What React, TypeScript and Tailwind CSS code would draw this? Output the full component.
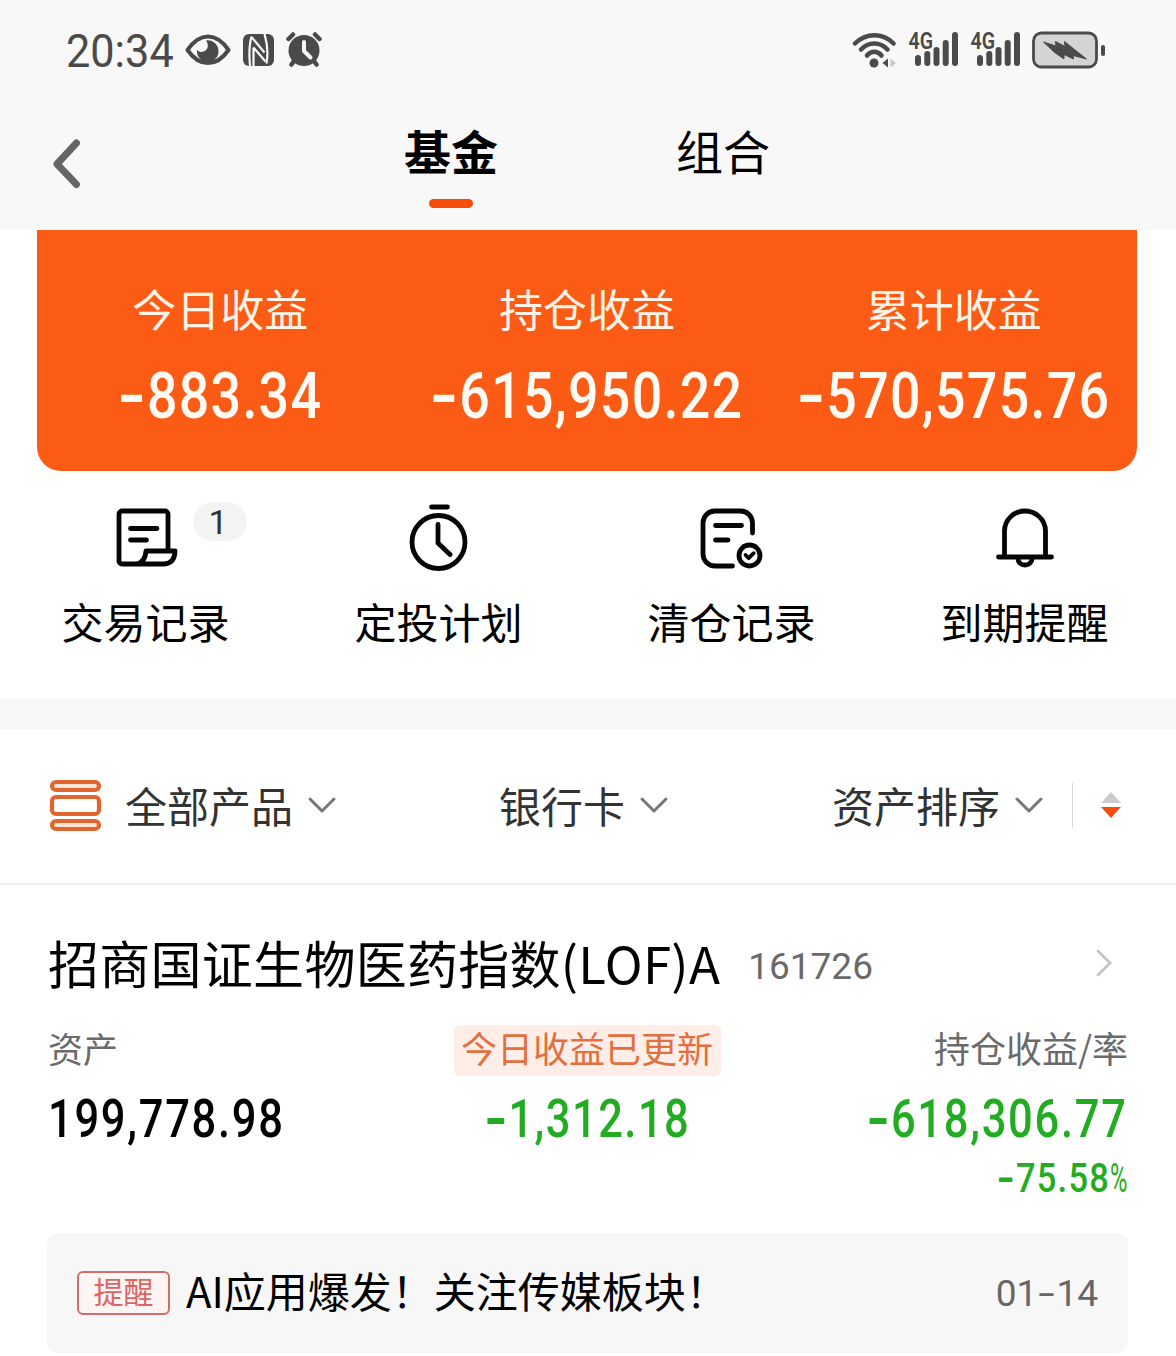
import type { ReactNode } from "react";
import clsx from "clsx";

const summary = [
  { label: "今日收益", value: "-883.34" },
  { label: "持仓收益", value: "-615,950.22" },
  { label: "累计收益", value: "-570,575.76" },
];

// Condensed figures, the sign is drawn wider than the font's own hyphen
const Num = ({ value, className, signClass }: { value: string; className: string; signClass: string }) => {
  const negative = value.startsWith("-");
  return (
    <span className={clsx("inline-flex shrink-0 whitespace-nowrap leading-none font-['Roboto',sans-serif]", className)}>
      {negative && <span className={clsx("flex scale-x-[1.4] justify-center font-bold", signClass)}>-</span>}
      <span>{negative ? value.slice(1) : value}</span>
    </span>
  );
};

const Signal = () => (
  <svg width="52" height="54" viewBox="0 -8 52 54" fill="#4a4a4a">
    <text x="0.500" y="17.500" fontSize="23.500" fontWeight="600" textLength="24.500" lengthAdjust="spacingAndGlyphs" fontFamily="Roboto, sans-serif">4G</text>
    <rect x="7" y="24" width="6" height="11" rx="3" />
    <rect x="16.300" y="20" width="6" height="15" rx="3" />
    <rect x="25.500" y="16" width="6" height="19" rx="3" />
    <rect x="34.700" y="9" width="6" height="26" rx="3" />
    <rect x="44" y="1" width="6" height="34" rx="3" />
  </svg>
);

const StatusBar = () => (
  <div className="flex h-[100px] items-center">
    <div className="ml-[66px] w-[119px] pt-0.5">
      <span className="inline-block origin-left scale-x-[0.94] text-[46px] leading-none text-[#4a4a4a] font-['Roboto',sans-serif]">20:34</span>
    </div>
    <svg width="46" height="32" viewBox="0 0 46 32">
      <path d="M2.500 16C8 8 15 2.500 23 2.500S38 8 43.500 16C38 24 31 29 23 29S8 24 2.500 16Z" fill="none" stroke="#4a4a4a" strokeWidth="4" strokeLinejoin="round" />
      <path d="M21 6.500a10.800 10.800 0 1 1-9 9.500c2 2.500 6 2.500 8.500.5 3-2.500 3-6.500.5-10Z" fill="#4a4a4a" />
    </svg>
    <svg width="32" height="34" viewBox="0 0 32 34" className="ml-[11px]">
      <rect x="1" y="1" width="31" height="32" rx="6" fill="#4a4a4a" />
      <path d="M9.500 3.500C7 12 7 22 8 33M22.500 1C25.500 11 26 22 24.500 30.500M9.500 4 22.500 19.500M11.500 14.500 23.500 28.500M11.500 14.500V33" fill="none" stroke="#f8f8f8" strokeWidth="2.200" />
    </svg>
    <svg width="36" height="36" viewBox="0 0 36 36" className="ml-[12px]">
      <circle cx="18" cy="18.500" r="15.500" fill="#4a4a4a" />
      <path d="M2.500 7 7 2.500M33.500 7 29 2.500M8 29 5.500 32.500M28 29 30.500 32.500" stroke="#4a4a4a" strokeWidth="4.500" strokeLinecap="round" />
      <path d="M18 10v9l6.500 6.500" fill="none" stroke="#f8f8f8" strokeWidth="4" strokeLinecap="round" strokeLinejoin="round" />
    </svg>
    <div className="ml-auto mr-[70px] flex items-center">
      <svg width="46" height="36" viewBox="0 0 46 36" className="mr-[10px]">
        <g fill="none" stroke="#4a4a4a" strokeWidth="4.500" strokeLinecap="round">
          <path d="M3 11.500C14 .5 31 .5 41.500 11.500" />
          <path d="M9 17.500C16.500 9.500 28 9.500 35.500 17.500" />
          <path d="M15 23.500C19 18.500 25.500 18.500 29.500 23.500" />
        </g>
        <circle cx="22" cy="31" r="4.500" fill="#4a4a4a" />
        <path d="M36 26.500v9L30.500 31Z" fill="#4a4a4a" />
        <path d="M38.500 26.500v9L44 31Z" fill="#c8c8c8" />
      </svg>
      <Signal />
      <div className="w-[10px]" />
      <Signal />
      <svg width="74" height="38" viewBox="0 0 74 38" className="ml-[10px]">
        <rect x="1.500" y="2" width="63" height="34" rx="8" fill="#d4d4d4" stroke="#4a4a4a" strokeWidth="2.800" />
        <rect x="69" y="14" width="4" height="11" rx="2" fill="#4a4a4a" />
        <path d="M11.500 11 24 15 23.500 10.500 33 15.500 32.500 10.500 45 20.500 54.500 28 41 24.500 41.500 28 32 23.500V28L22 21Z" fill="#4a4a4a" stroke="#4a4a4a" strokeLinejoin="round" />
      </svg>
    </div>
  </div>
);

const NavBar = () => (
  <div className="flex h-[130px] text-[47px] leading-none text-black">
    <svg width="30" height="54" viewBox="0 0 30 54" className="ml-[52px] mt-[37px]">
      <path d="M24.500 6 5 27 24.500 47.500" fill="none" stroke="#666" strokeWidth="7" strokeLinecap="round" strokeLinejoin="round" />
    </svg>
    <div className="ml-[322px] mt-[26px] flex w-[94px] flex-col items-center">
      <span className="font-bold">基金</span>
      <span className="mt-[26px] h-[9px] w-11 rounded-full bg-[#f84c0c]" />
    </div>
    <span className="ml-[178px] mt-[26px]">组合</span>
  </div>
);

const Action = ({ label, badge, children }: { label: string; badge?: string; children: ReactNode }) => (
  <div className="relative flex flex-col items-center">
    <svg width="70" height="70" viewBox="0 0 70 70" className="mt-[31px]" fill="none" stroke="#050505" strokeWidth="4.800" strokeLinecap="round" strokeLinejoin="round">
      {children}
    </svg>
    <span className="mt-[28px] text-[42px] leading-none text-black">{label}</span>
    {badge && (
      <span className="absolute left-[194px] top-[31px] flex h-[39px] w-[54px] items-center justify-center rounded-full bg-[#f4f4f4] pr-1 text-[34px] leading-none text-[#333] font-['Roboto',sans-serif]">
        {badge}
      </span>
    )}
  </div>
);

const Actions = () => (
  <div className="-ml-px grid h-[228px] w-[1172px] grid-cols-4">
    <Action label="交易记录" badge="1">
      <path d="M57 48V12a3 3 0 0 0-3-3H11a3 3 0 0 0-3 3v47a3 3 0 0 0 3 3h42q11-1 11-13H35q-1 12-10 13M19.500 26.500H46M19.500 38H35.500" />
    </Action>
    <Action label="定投计划">
      <circle cx="34.500" cy="40" r="26.500" />
      <path d="M27.500 5H43.500M34 22.500V41L46 52.500" />
    </Action>
    <Action label="清仓记录">
      <path d="M55.500 31V21a12 12 0 0 0-12-12H18A12 12 0 0 0 6 21V52a12 12 0 0 0 12 12H35.500M18.500 23.500H44.500M18.500 38H31" />
      <circle cx="52.500" cy="53.500" r="10.500" />
      <path d="m48.500 53 3.200 3.200 5-5" strokeWidth="3.800" />
    </Action>
    <Action label="到期提醒">
      <path d="M14.500 55V29a20.500 20 0 0 1 41 0V55M8.500 55H61.500M28 57a7 6 0 0 0 14 0" />
    </Action>
  </div>
);

const ChevronDown = () => (
  <svg width="30" height="20" viewBox="0 0 30 20">
    <path d="M3 4 15 16 27 4" fill="none" stroke="#777" strokeWidth="3" strokeLinecap="round" strokeLinejoin="round" />
  </svg>
);

const FilterBar = () => (
  <div className="flex h-[156px] items-center border-b-2 border-[#ececec] pb-0.5 text-[42px] leading-none text-[#333]">
    <svg width="54" height="54" viewBox="0 0 54 54" className="ml-[48px]" stroke="#e1652f" strokeWidth="4.200" fill="#ffe6d4">
      <rect x="4" y="4" width="47" height="8" rx="4" />
      <rect x="4" y="19" width="47" height="17" rx="4" fill="#fff" />
      <rect x="4" y="43" width="47" height="8" rx="4" />
    </svg>
    <span className="ml-[23px] mr-[14px] pb-px">全部产品</span>
    <ChevronDown />
    <span className="ml-[162px] mr-[14px] pb-px">银行卡</span>
    <ChevronDown />
    <span className="ml-[163px] mr-[14px] pb-px">资产排序</span>
    <ChevronDown />
    <div className="ml-[28px] h-[45px] w-px bg-[#d8d8d8]" />
    <svg width="22" height="28" viewBox="0 0 22 28" className="ml-[27px]">
      <path d="M11 1 21 12H1Z" fill="#ccc" />
      <path d="M11 27 21 16H1Z" fill="#f84c0c" />
    </svg>
  </div>
);

const FundCard = () => (
  <div className="px-12 pt-[52px]">
    <div className="flex h-[51px] items-center">
      <span className="text-[51px] leading-none tracking-[0.28px] text-black">招商国证生物医药指数(LOF)A</span>
      <span className="ml-[28px] pt-[7px] text-[37px] leading-none text-[#6a6a6a] font-['Roboto',sans-serif]">161726</span>
      <svg width="20" height="32" viewBox="0 0 20 32" className="ml-auto mr-[14px]">
        <path d="M4 4 16 16 4 28" fill="none" stroke="#c4c4c4" strokeWidth="2.800" strokeLinecap="round" />
      </svg>
    </div>

    <div className="mt-[37px] flex h-[51px] items-center justify-between text-[35px] leading-none text-[#6a6a6a]">
      <span className="w-[359px] pb-[7px]">资产</span>
      <span className="flex h-[51px] w-[267px] items-center justify-center rounded-md bg-[#ffeee8] pb-[7px] text-[36px] text-[#e2703f]">今日收益已更新</span>
      <span className="w-[361px] pb-[7px] text-right text-[36px]">持仓收益/率</span>
    </div>

    <div className="mt-[17px] grid h-[53px] grid-cols-3">
      <div>
        <Num value="199,778.98" className="origin-left scale-x-[0.82] text-[53px] font-medium tracking-[2.1px] text-black" signClass="" />
      </div>
      <div className="flex justify-center">
        <Num value="-1,312.18" className="scale-x-[0.82] text-[53px] font-medium tracking-[1.8px] text-[#22ac22]" signClass="w-[28px]" />
      </div>
      <div className="flex justify-end">
        <Num value="-618,306.77" className="origin-right scale-x-[0.82] text-[53px] font-medium tracking-[2.1px] text-[#22ac22]" signClass="w-[28px]" />
      </div>
    </div>
    <div className="mt-[12px] flex h-[41px] justify-end">
      <Num value="-75.58" className="origin-right scale-x-[0.84] text-[41px] font-medium tracking-[1.5px] text-[#22ac22]" signClass="w-[22px]" />
      <span className="w-[18px] text-[41px] leading-none text-[#22ac22] font-['Roboto',sans-serif]">
        <span className="inline-block origin-left scale-x-[0.58]">%</span>
      </span>
    </div>
  </div>
);

const Reminder = () => (
  <div className="ml-[47px] mt-[34px] flex h-[120px] w-[1081px] items-center rounded-xl bg-[#f7f7f7] pl-[30px] pr-[30px]">
    <span className="flex h-[44px] w-[93px] items-center justify-center rounded-md border-2 border-[#d46c6c] bg-[#fdf5f4] pb-[6px] text-[30px] leading-none text-[#de6464]">提醒</span>
    <span className="ml-[16px] pb-[7px] text-[42px] leading-none text-black">AI应用爆发！关注传媒板块！</span>
    <span className="ml-auto flex text-[37px] leading-none text-[#666] font-['Roboto',sans-serif]">
      <span>01</span>
      <span className="flex w-[19px] scale-x-[1.6] justify-center">-</span>
      <span>14</span>
    </span>
  </div>
);

export default function App() {
  return (
    <div className="h-[1356px] w-[1176px] overflow-hidden bg-white font-['Noto_Sans_CJK_SC',sans-serif]">
      <div className="bg-[#f8f8f8]">
        <StatusBar />
        <NavBar />
      </div>

      <div className="ml-[37px] grid h-[241px] w-[1100px] grid-cols-3 rounded-b-3xl bg-[#fb5b14]">
        {summary.map((item) => (
          <div key={item.label} className="flex flex-col items-center">
            <span className="mt-[56px] text-[44px] leading-none text-[#fff3e6]">{item.label}</span>
            <Num value={item.value} className="mt-[35px] scale-x-[0.84] text-[64px] font-medium tracking-[1.5px] text-[#fffaf3]" signClass="w-[34px]" />
          </div>
        ))}
      </div>

      <Actions />
      <div className="h-[30px] bg-[#f7f7f7]" />
      <FilterBar />
      <FundCard />
      <Reminder />
    </div>
  );
}
